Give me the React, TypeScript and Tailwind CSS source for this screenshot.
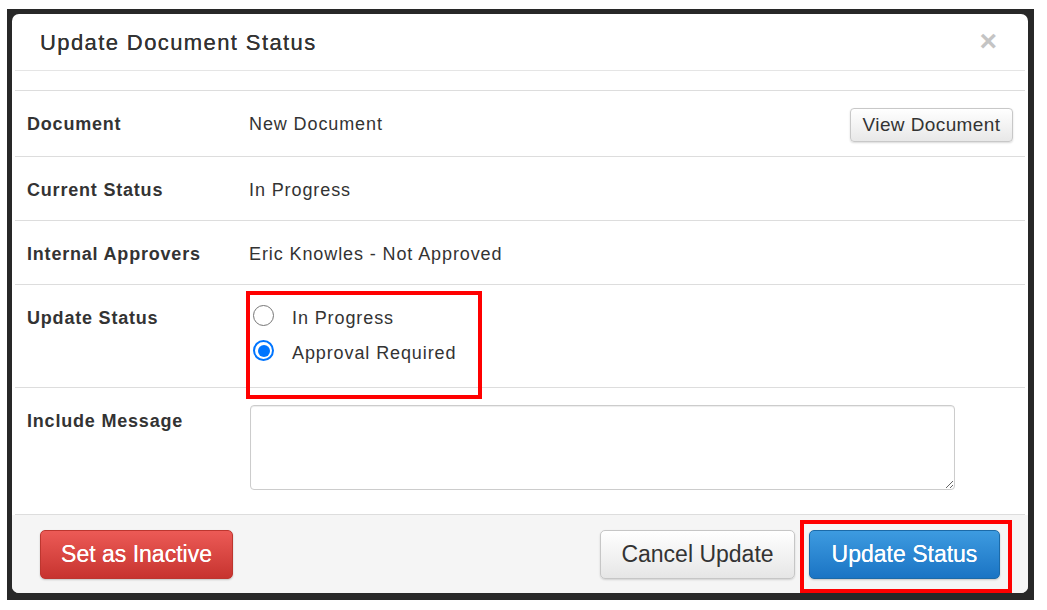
import React from 'react';

const font = { fontFamily: '"Liberation Sans", Arial, sans-serif' };

const Row = ({ label, children, className = '' }: { label: string; children: React.ReactNode; className?: string }) => (
    <div className={`flex mx-[3px] px-[12px] border-b border-[#dddddd] ${className}`}>
        <div className="w-[222px] shrink-0 pt-[23px] leading-[20px] text-[18px] font-bold tracking-[0.8px] text-[#333333]">{label}</div>
        <div className="flex-1 min-w-0">{children}</div>
    </div>
);

const Radio = ({ checked, label }: { checked?: boolean; label: string }) => (
    <div className="flex items-center h-[35px]">
        {checked ? (
            <span className="ml-[4px] w-[21px] h-[21px] rounded-full border-[2px] border-[#0075ff] bg-white flex items-center justify-center shrink-0">
                <span className="w-[12px] h-[12px] rounded-full bg-[#0075ff]"></span>
            </span>
        ) : (
            <span className="ml-[4px] w-[21px] h-[21px] rounded-full border-[1.5px] border-[#767676] bg-white shrink-0"></span>
        )}
        <span className="ml-[18px] mt-[5px] text-[18px] tracking-[0.9px] text-[#333333]">{label}</span>
    </div>
);

export default function App() {
    return (
        <div className="w-[1047px] h-[610px] bg-white overflow-hidden" style={font}>
            <div className="ml-[7px] mt-[9px] w-[1027px] h-[591px] bg-[#282828] pl-[5px] pt-[5px]">
                <div className="relative w-[1016px] h-[579px] bg-white rounded-[7px] overflow-hidden flex flex-col">
                    {/* header */}
                    <div className="h-[57px] mx-[3px] border-b border-[#e5e5e5] flex items-center justify-between pl-[25px] pr-[28px] shrink-0">
                        <h3 className="text-[22px] tracking-[1.4px] text-[#333333] mt-[1px] [text-shadow:0_0_0.5px_#333]">Update Document Status</h3>
                        <span className="text-[30px] font-bold leading-none text-[#c4c4c4] mt-[-2px]">×</span>
                    </div>
                    <div className="h-[20px] mx-[3px] border-b border-[#dddddd] shrink-0"></div>

                    <Row label="Document" className="h-[66px]">
                        <div className="flex items-start justify-between">
                            <span className="pt-[23px] leading-[20px] text-[18px] tracking-[0.9px] text-[#333333]">New Document</span>
                            <button className="mt-[17px] h-[34px] w-[163px] rounded-[4px] border border-[#c8c8c8] bg-gradient-to-b from-white to-[#e8e8e8] text-[19px] tracking-[0.4px] text-[#333333] shadow-[0_1px_2px_rgba(0,0,0,0.15)]">View Document</button>
                        </div>
                    </Row>
                    <Row label="Current Status" className="h-[64px]">
                        <span className="block pt-[23px] leading-[20px] text-[18px] tracking-[0.9px] text-[#333333]">In Progress</span>
                    </Row>
                    <Row label="Internal Approvers" className="h-[64px]">
                        <span className="block pt-[23px] leading-[20px] text-[18px] tracking-[0.9px] text-[#333333]">Eric Knowles - Not Approved</span>
                    </Row>
                    <Row label="Update Status" className="h-[103px]">
                        <div className="pt-[13px]">
                            <Radio label="In Progress" />
                            <Radio checked label="Approval Required" />
                        </div>
                    </Row>
                    <Row label="Include Message" className="h-[127px]">
                        <textarea
                            readOnly
                            className="mt-[17px] ml-[1px] w-[705px] h-[85px] rounded-[4px] border border-[#cccccc] bg-white shadow-[inset_0_1px_1px_rgba(0,0,0,0.075)] resize focus:outline-none"
                        ></textarea>
                    </Row>

                    {/* footer */}
                    <div className="flex-1 bg-[#f5f5f5] flex items-start justify-between px-[28px] pt-[15px]">
                        <button className="h-[49px] w-[193px] rounded-[5px] border border-[#bd362f] bg-gradient-to-b from-[#ec5a56] to-[#c7332f] text-white text-[23px] [text-shadow:0_0_0.6px_#fff] shadow-[0_1px_2px_rgba(0,0,0,0.2)]">Set as Inactive</button>
                        <div className="flex gap-[14px]">
                            <button className="h-[49px] w-[195px] rounded-[5px] border border-[#c6c6c6] bg-gradient-to-b from-white to-[#e6e6e6] text-[#333333] text-[23px] shadow-[0_1px_2px_rgba(0,0,0,0.15)]">Cancel Update</button>
                            <button className="h-[49px] w-[191px] rounded-[5px] border border-[#1b6aa8] bg-gradient-to-b from-[#3d9be0] to-[#1a74c4] text-white text-[23px] [text-shadow:0_0_0.6px_#fff] shadow-[0_1px_2px_rgba(0,0,0,0.2)]">Update Status</button>
                        </div>
                    </div>

                    {/* annotation boxes */}
                    <div className="absolute left-[234px] top-[277px] w-[236px] h-[108px] border-[4px] border-[#ff0000]"></div>
                    <div className="absolute left-[788px] top-[506px] w-[212px] h-[73px] border-[4px] border-[#ff0000]"></div>
                </div>
            </div>
        </div>
    );
}
